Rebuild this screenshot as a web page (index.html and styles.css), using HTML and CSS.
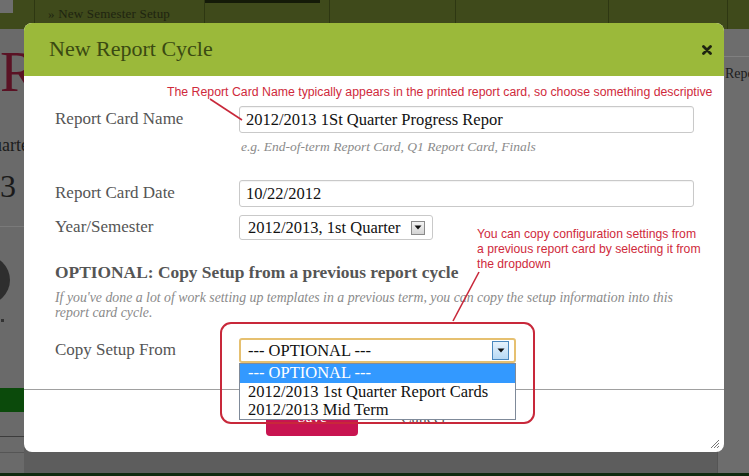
FILE: index.html
```html
<!DOCTYPE html>
<html>
<head>
<meta charset="utf-8">
<link rel="stylesheet" href="styles.css">
</head>
<body>
<div class="page">
  <nav class="topnav">
    <div class="navcell c0"><span class="navsq"></span></div>
    <div class="navcell c1"><span class="navlink">» New Semester Setup</span></div>
    <div class="navcell c2"><span class="navtab"></span></div>
    <div class="navcell c3"></div>
    <div class="navcell c4"></div>
    <div class="navcell c5"></div>
    <div class="navcell c6"></div>
  </nav>
  <div class="pagebody">
    <div class="leftcol">
      <div class="bigR">R</div>
      <div class="quar">Quarter</div>
      <div class="three">3</div>
      <div class="hr"></div>
      <div class="avatar"></div>
      <div class="dot"></div>
      <div class="greenbar">Semester</div>
      <div class="line l1"></div>
      <div class="line l2"></div>
    </div>
    <div class="maincol"></div>
    <div class="rightcol">
      <div class="rline"></div>
      <div class="rep">Report</div>
    </div>
  </div>
  <div class="footstrip"></div>
</div>

<div class="modal">
  <div class="mhead">
    <h1 class="mtitle">New Report Cycle</h1>
    <svg class="mclose" width="10" height="10" viewBox="0 0 10 10"><path d="M1.5 1.5 L8.5 8.5 M8.5 1.5 L1.5 8.5" stroke="#1e2410" stroke-width="2.8" stroke-linecap="round"/></svg>
  </div>
  <div class="mform">
    <div class="frow">
      <label class="flabel">Report Card Name</label>
      <div class="finput wide">2012/2013 1St Quarter Progress Repor</div>
    </div>
    <div class="fhint">e.g. End-of-term Report Card, Q1 Report Card, Finals</div>
    <div class="frow r2">
      <label class="flabel">Report Card Date</label>
      <div class="finput wide">10/22/2012</div>
    </div>
    <div class="frow r3">
      <label class="flabel">Year/Semester</label>
      <div class="fselect sem">
        <span class="seltext">2012/2013, 1st Quarter</span>
        <span class="selbtn"><svg width="8" height="5" viewBox="0 0 8 5"><path d="M0.5 0.5 H7.5 L4 4.5 Z" fill="#111"/></svg></span>
      </div>
    </div>
    <h2 class="opthead">OPTIONAL: Copy Setup from a previous report cycle</h2>
    <p class="optdesc">If you've done a lot of work setting up templates in a previous term, you can copy the setup information into this report card cycle.</p>
    <div class="frow r4">
      <label class="flabel">Copy Setup From</label>
      <div class="fselect copy">
        <span class="seltext">--- OPTIONAL ---</span>
        <span class="selbtn blue"><svg width="8" height="5" viewBox="0 0 8 5"><path d="M0.5 0.5 H7.5 L4 4.5 Z" fill="#111"/></svg></span>
        <ul class="droplist">
          <li class="sel">--- OPTIONAL ---</li>
          <li>2012/2013 1st Quarter Report Cards</li>
          <li>2012/2013 Mid Term</li>
        </ul>
      </div>
    </div>
  </div>
  <div class="mfoot">
    <span class="btn">Save</span>
    <span class="cancel">Cancel</span>
  </div>
  <svg class="grip" width="11" height="11" viewBox="0 0 11 11"><path d="M10 2 L2 10 M10 5 L5 10 M10 8 L8 10" stroke="#777" stroke-width="1"/></svg>
</div>

<svg class="annot" width="749" height="476" viewBox="0 0 749 476">
  <line x1="210" y1="99" x2="242" y2="120" stroke="#c8283a" stroke-width="1.6"/>
  <line x1="453" y1="321" x2="479" y2="272" stroke="#c8283a" stroke-width="1.6"/>
  <rect x="221" y="323" width="313" height="100" rx="10" ry="10" fill="none" stroke="#c8283a" stroke-width="2"/>
</svg>
<div class="note note1">The Report Card Name typically appears in the printed report card, so choose something descriptive</div>
<div class="note note2">You can copy configuration settings from<br>a previous report card by selecting it from<br>the dropdown</div>
</body>
</html>
```

FILE: styles.css
```css
html, body {
  margin: 0;
  padding: 0;
}
body {
  width: 749px;
  height: 476px;
  overflow: hidden;
  position: relative;
  background: #6a6a6a;
  font-family: "Liberation Serif", "Times New Roman", serif;
}

/* ---------- dimmed background page ---------- */
.page {
  width: 749px;
  height: 476px;
  display: flex;
  flex-direction: column;
}
.topnav {
  height: 29px;
  display: flex;
  background: #3f4a1b;
  flex: none;
}
.navcell {
  height: 100%;
  border-right: 1px solid #2e3712;
  box-sizing: border-box;
  position: relative;
}
.c0 { width: 35px; }
.c1 { width: 170px; }
.c2 { width: 125px; }
.c3 { width: 126px; }
.c4 { width: 153px; }
.c5 { width: 119px; }
.c6 { flex: 1; border-right: none; }
.navsq {
  display: block;
  width: 13px;
  height: 13px;
  background: #6e6e6e;
}
.navlink {
  display: block;
  padding: 6px 0 0 13px;
  font-size: 13px;
  color: #1e2410;
  letter-spacing: 0.2px;
  white-space: nowrap;
}
.navtab {
  display: block;
  width: 115px;
  height: 3px;
  background: #141a08;
}
.pagebody {
  flex: 1;
  display: flex;
}
.leftcol {
  width: 24px;
  overflow: hidden;
  display: flex;
  flex-direction: column;
}
.leftcol > * { flex: none; }
.bigR {
  margin-top: 18px;
  font-size: 57px;
  line-height: 50px;
  color: #5a1224;
  white-space: nowrap;
}
.quar {
  margin-top: 38px;
  font-size: 18px;
  line-height: 20px;
  color: #1c1c1c;
  text-indent: -20px;
  white-space: nowrap;
}
.three {
  margin-top: 16px;
  font-size: 32px;
  line-height: 30px;
  color: #1a1a1a;
}
.hr {
  margin-top: 25px;
  height: 1px;
  background: #7a7a7a;
}
.avatar {
  margin-top: 28px;
  margin-left: -42px;
  width: 52px;
  height: 50px;
  border-radius: 50%;
  background: #2e2e2e;
}
.dot {
  margin-top: 14px;
  margin-left: 1px;
  width: 3px;
  height: 3px;
  background: #333;
}
.greenbar {
  margin-top: 66px;
  height: 24px;
  background: #0b4a0b;
  font-size: 13px;
  line-height: 24px;
  color: #222;
  text-indent: -52px;
  white-space: nowrap;
}
.line {
  height: 1px;
  background: #3c3c3c;
}
.l1 { margin-top: 24px; }
.l2 { margin-top: 15px; background: #555; }
.maincol {
  flex: 1;
  background: #5d5d5d;
}
.rightcol {
  width: 31px;
  display: flex;
  flex-direction: column;
  background: #6d6d6d;
  border-left: 1px solid #555;
}
.rline {
  margin-top: 27px;
  height: 1px;
  background: #808080;
}
.rep {
  margin-top: 9px;
  padding-left: 7px;
  font-size: 14px;
  color: #1c1c1c;
  white-space: nowrap;
}
.footstrip {
  height: 3px;
  background: #0f2a0f;
  flex: none;
}

/* ---------- modal ---------- */
.modal {
  position: absolute;
  left: 24px;
  top: 23px;
  width: 700px;
  height: 429px;
  background: #fff;
  border-radius: 8px;
  overflow: visible;
}
.mhead {
  height: 53px;
  background: #9bb93a;
  border-radius: 8px 8px 0 0;
  display: flex;
  align-items: center;
  justify-content: space-between;
  padding: 0 12px 0 25px;
}
.mtitle {
  margin: 0;
  font-weight: normal;
  font-size: 22px;
  color: #3a4a12;
  position: relative;
  top: -1px;
}
.mclose {
  display: block;
}
.mform {
  padding: 30px 0 26px 31px;
  color: #555;
}
.frow {
  display: grid;
  grid-template-columns: 184px auto;
  align-items: center;
}
.flabel {
  font-size: 17px;
  line-height: 20px;
  color: #555;
  position: relative;
  top: -1px;
}
.finput {
  box-sizing: border-box;
  height: 27px;
  border: 1px solid #c9c9c9;
  border-radius: 3px;
  padding: 0 6px;
  font-size: 16.5px;
  line-height: 25px;
  color: #111;
  box-shadow: inset 0 1px 1px rgba(0,0,0,0.05);
}
.finput.wide { width: 455px; }
.fhint {
  margin: 7px 0 0 186px;
  font-size: 13.5px;
  line-height: 14px;
  font-style: italic;
  color: #8a8a8a;
}
.r2 { margin-top: 26px; }
.r3 { margin-top: 8px; }
.fselect {
  box-sizing: border-box;
  height: 25px;
  border: 1px solid #c9c9c9;
  border-radius: 3px;
  display: flex;
  align-items: center;
  justify-content: space-between;
  padding: 0 7px 0 8px;
  font-size: 16.5px;
  color: #111;
  position: relative;
}
.fselect.sem { width: 194px; }
.fselect.copy {
  width: 277px;
  border: 2px solid #e6c070;
  padding: 0 5px 0 7px;
}
.selbtn {
  box-sizing: border-box;
  width: 14px;
  height: 14px;
  border: 1px solid #8a8a8a;
  background: linear-gradient(#f4f4f4, #d4d4d4);
  display: flex;
  align-items: center;
  justify-content: center;
}
.selbtn.blue {
  width: 17px;
  height: 19px;
  border-color: #4a88be;
  background: linear-gradient(#e6f2fc, #b8daf5);
}
.opthead {
  margin: 22px 0 0 0;
  font-size: 17.4px;
  line-height: 20px;
  font-weight: bold;
  color: #555;
}
.optdesc {
  margin: 8px 0 0 0;
  width: 640px;
  font-size: 13.8px;
  line-height: 15px;
  font-style: italic;
  color: #8a8a8a;
}
.r4 { margin-top: 18px; }
.droplist {
  position: absolute;
  left: -2px;
  top: 23px;
  width: 277px;
  box-sizing: border-box;
  margin: 0;
  padding: 0;
  list-style: none;
  background: #fff;
  border: 1px solid #7f8a99;
  z-index: 5;
}
.droplist li {
  height: 18px;
  line-height: 18px;
  padding-left: 8px;
  font-size: 16.5px;
  color: #111;
  white-space: nowrap;
}
.droplist li.sel {
  height: 19px;
  background: #3399ff;
  color: #fff;
}
.mfoot {
  border-top: 1px solid #a0a0a0;
  padding: 18px 0 0 242px;
  display: flex;
  align-items: flex-start;
}
.btn {
  width: 92px;
  height: 28px;
  border-radius: 4px;
  background: #c81450;
  color: #fff;
  font-size: 15px;
  line-height: 18px;
  text-align: center;
}
.cancel {
  margin-left: 43px;
  font-size: 16px;
  line-height: 20px;
  color: #555;
}
.grip {
  position: absolute;
  right: 4px;
  bottom: 3px;
}

/* ---------- annotations ---------- */
.annot {
  position: absolute;
  left: 0;
  top: 0;
  z-index: 10;
  pointer-events: none;
}
.note {
  position: absolute;
  z-index: 11;
  font-family: "Liberation Sans", Arial, sans-serif;
  color: #cf2a3c;
  white-space: nowrap;
}
.note1 {
  left: 167px;
  top: 85px;
  font-size: 12.3px;
  line-height: 14px;
}
.note2 {
  left: 477px;
  top: 227px;
  font-size: 12.2px;
  line-height: 15px;
}
```
